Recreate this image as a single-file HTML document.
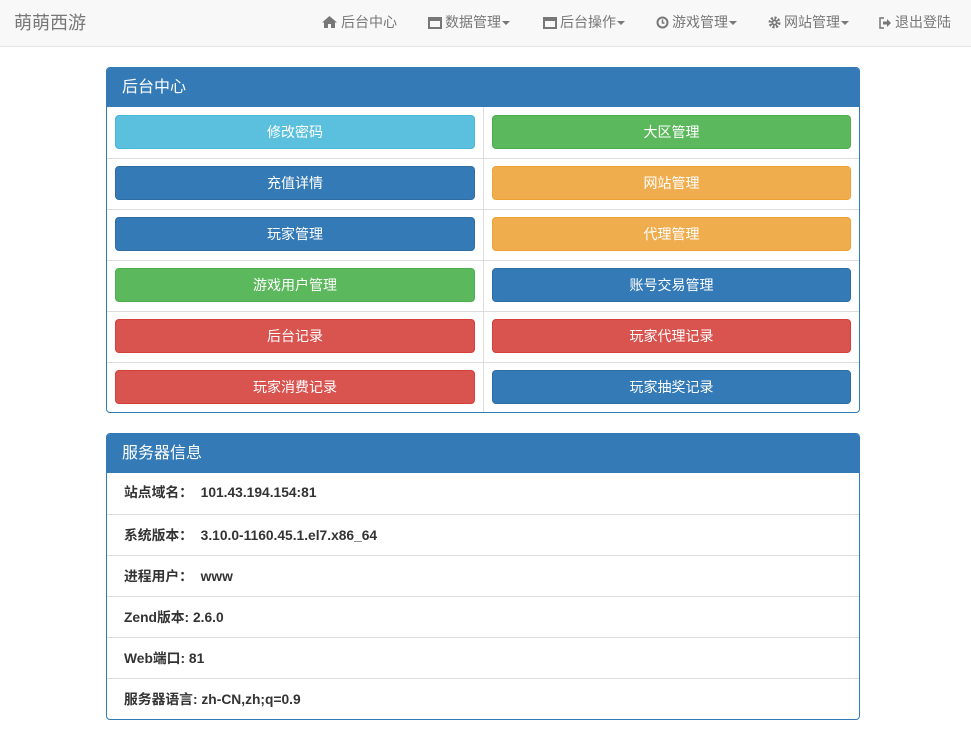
<!DOCTYPE html>
<html><head><meta charset="utf-8"><style>
*{box-sizing:border-box;margin:0;padding:0}
body{width:971px;height:730px;background:#fff;font-family:"Liberation Sans","Noto Sans CJK SC",sans-serif;font-size:14px;color:#333;position:relative;overflow:hidden}
.nav{position:absolute;left:0;top:0;width:971px;height:47px;background:#f8f8f8;border-bottom:1px solid #e7e7e7}
.brand{position:absolute;left:14px;top:9px;font-size:18px;color:#777}
.ni{position:absolute;top:12px;color:#777;font-size:14px;white-space:nowrap}
.ni svg{vertical-align:-2px;margin-right:3px}
.caret{display:inline-block;width:0;height:0;border-left:4px solid transparent;border-right:4px solid transparent;border-top:4px solid #777;vertical-align:2px;margin-left:1px}
.panel{position:absolute;left:106px;width:754px;border:1px solid #337ab7;border-radius:4px;overflow:hidden}
.ph{background:#337ab7;color:#fff;font-size:16px;height:39px;line-height:39px;padding-left:15px}
.row{display:flex;height:51px;border-top:1px solid #ddd}
.row .cell{padding:7px 8px 8px}
.row.f{border-top:none}
.row.f .cell{padding:8px}
.cell{flex:0 0 376px}
.cell+.cell{border-left:1px solid #ddd;flex:1}
.btn{height:34px;border-radius:4px;color:#fff;text-align:center;line-height:33px;font-size:14px;border:1px solid}
.info{background:#5bc0de;border-color:#46b8da}
.ok{background:#5cb85c;border-color:#4cae4c}
.pr{background:#337ab7;border-color:#2e6da4}
.wa{background:#f0ad4e;border-color:#eea236}
.da{background:#d9534f;border-color:#d43f3a}
.ir{height:41px;line-height:41px;padding-left:17px;font-weight:bold;font-size:13.8px;border-top:1px solid #ddd}
.ir.f{border-top:none;line-height:40px}
</style></head><body>
<div class="nav">
<div class="brand">萌萌西游</div>
<div class="ni" style="left:321px"><svg width="17" height="14" viewBox="0 0 17 14"><path d="M8.5 1L1 7.5h2V13h4V9h3v4h4V7.5h2z" fill="#777"/></svg>后台中心</div>
<div class="ni" style="left:428px"><svg width="14" height="12" viewBox="0 0 14 12"><rect x="1" y="1" width="12" height="10" fill="none" stroke="#777" stroke-width="2"/><rect x="1" y="1" width="12" height="3" fill="#777"/></svg>数据管理<span class="caret"></span></div>
<div class="ni" style="left:543px"><svg width="14" height="12" viewBox="0 0 14 12"><rect x="1" y="1" width="12" height="10" fill="none" stroke="#777" stroke-width="2"/><rect x="1" y="1" width="12" height="3" fill="#777"/></svg>后台操作<span class="caret"></span></div>
<div class="ni" style="left:656px"><svg width="13" height="13" viewBox="0 0 13 13"><circle cx="6.5" cy="6.5" r="5" fill="none" stroke="#777" stroke-width="2"/><path d="M6.5 3.5v3.5h2" stroke="#777" stroke-width="1.5" fill="none"/></svg>游戏管理<span class="caret"></span></div>
<div class="ni" style="left:768px"><svg width="13" height="13" viewBox="0 0 13 13"><circle cx="6.5" cy="6.5" r="4.5" fill="none" stroke="#777" stroke-width="3" stroke-dasharray="2 1.5"/><circle cx="6.5" cy="6.5" r="3" fill="#777"/><circle cx="6.5" cy="6.5" r="1.3" fill="#f8f8f8"/></svg>网站管理<span class="caret"></span></div>
<div class="ni" style="left:879px"><svg width="13" height="12" viewBox="0 0 13 12"><path d="M5 1H1v10h4" fill="none" stroke="#777" stroke-width="1.5"/><path d="M4 4.5h4V2l4 4-4 4V7.5H4z" fill="#777"/></svg>退出登陆</div>
</div>

<div class="panel" style="top:67px;height:346px">
<div class="ph">后台中心</div>
<div class="row f"><div class="cell"><div class="btn info">修改密码</div></div><div class="cell"><div class="btn ok">大区管理</div></div></div>
<div class="row"><div class="cell"><div class="btn pr">充值详情</div></div><div class="cell"><div class="btn wa">网站管理</div></div></div>
<div class="row"><div class="cell"><div class="btn pr">玩家管理</div></div><div class="cell"><div class="btn wa">代理管理</div></div></div>
<div class="row"><div class="cell"><div class="btn ok">游戏用户管理</div></div><div class="cell"><div class="btn pr">账号交易管理</div></div></div>
<div class="row"><div class="cell"><div class="btn da">后台记录</div></div><div class="cell"><div class="btn da">玩家代理记录</div></div></div>
<div class="row"><div class="cell"><div class="btn da">玩家消费记录</div></div><div class="cell"><div class="btn pr">玩家抽奖记录</div></div></div>
</div>

<div class="panel" style="top:433px;height:287px">
<div class="ph">服务器信息</div>
<div class="ir f">站点域名：&nbsp; 101.43.194.154:81</div>
<div class="ir">系统版本：&nbsp; 3.10.0-1160.45.1.el7.x86_64</div>
<div class="ir">进程用户：&nbsp; www</div>
<div class="ir">Zend版本: 2.6.0</div>
<div class="ir">Web端口: 81</div>
<div class="ir">服务器语言: zh-CN,zh;q=0.9</div>
</div>
</body></html>
